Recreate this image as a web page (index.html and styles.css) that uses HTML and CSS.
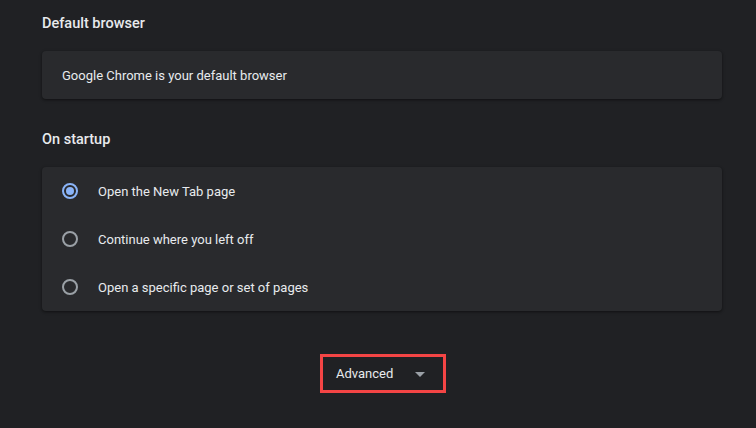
FILE: index.html
```html
<!DOCTYPE html>
<html>
<head>
<meta charset="utf-8">
<link rel="stylesheet" href="styles.css">
</head>
<body>
<main class="page">
  <h2 class="section-title first">Default browser</h2>
  <div class="card">
    <div class="row">Google Chrome is your default browser</div>
  </div>

  <h2 class="section-title">On startup</h2>
  <div class="card">
    <div class="radio-row"><span class="radio checked"></span><span class="label">Open the New Tab page</span></div>
    <div class="radio-row"><span class="radio"></span><span class="label">Continue where you left off</span></div>
    <div class="radio-row"><span class="radio"></span><span class="label">Open a specific page or set of pages</span></div>
  </div>

  <div class="advanced-wrap">
    <div class="advanced">
      <span class="adv-label">Advanced</span>
      <span class="arrow"></span>
    </div>
  </div>
</main>
</body>
</html>
```
FILE: styles.css
```css
html, body {
  margin: 0;
  padding: 0;
  background: #202124;
  height: 100%;
}
body {
  font-family: Roboto, "Liberation Sans", sans-serif;
  color: #e8eaed;
  font-size: 13px;
  overflow: hidden;
}
.page {
  width: 680px;
  margin-left: 42px;
}
.section-title {
  margin: 0;
  font-size: 14.5px;
  font-weight: 500;
  line-height: 20px;
  padding-top: 31px;
  padding-bottom: 17px;
  color: #e8eaed;
}
.section-title.first {
  padding-top: 14px;
}
.card {
  background: #292a2d;
  border-radius: 4px;
  box-shadow: 0 1px 2px 0 rgba(0,0,0,0.3), 0 1px 3px 1px rgba(0,0,0,0.15);
}
.row {
  height: 48px;
  display: flex;
  align-items: center;
  padding-left: 20px;
}
.radio-row {
  height: 48px;
  display: flex;
  align-items: center;
  padding-left: 20px;
}
.radio {
  box-sizing: border-box;
  width: 16px;
  height: 16px;
  border: 2px solid #9aa0a6;
  border-radius: 50%;
  margin-right: 20px;
  position: relative;
  flex: none;
}
.radio.checked {
  border-color: #8ab4f8;
}
.radio.checked::after {
  content: "";
  position: absolute;
  left: 2px;
  top: 2px;
  width: 8px;
  height: 8px;
  border-radius: 50%;
  background: #8ab4f8;
}
.advanced-wrap {
  display: flex;
  justify-content: center;
  padding-top: 43px;
  padding-left: 2px;
}
.advanced {
  box-sizing: border-box;
  width: 126px;
  height: 39px;
  border: 3px solid #f44545;
  display: flex;
  align-items: center;
  padding-left: 13px;
}
.adv-label {
  color: #e8eaed;
  font-size: 13px;
}
.arrow {
  width: 0;
  height: 0;
  border-left: 5px solid transparent;
  border-right: 5px solid transparent;
  border-top: 5px solid #9aa0a6;
  margin-left: 22px;
  margin-top: 1px;
}
```
